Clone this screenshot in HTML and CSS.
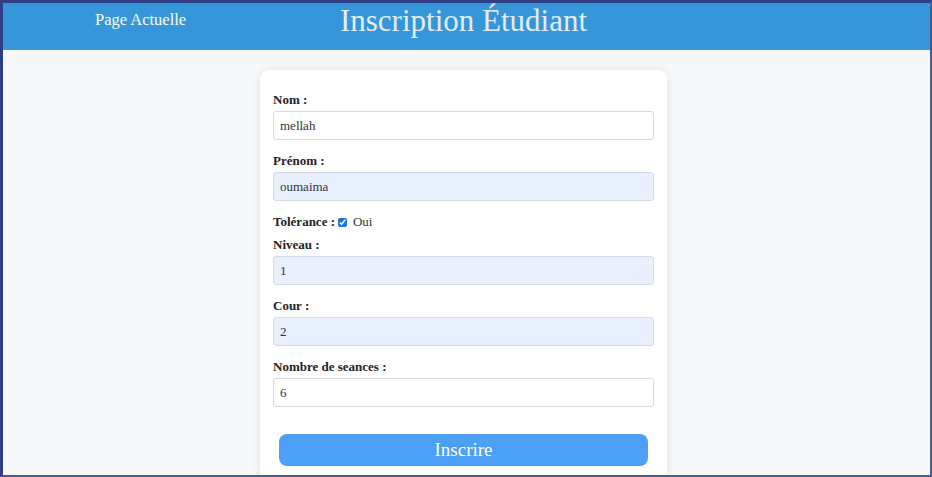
FILE: index.html
```html
<!DOCTYPE html>
<html lang="fr">
<head>
<meta charset="utf-8">
<title>Inscription Étudiant</title>
<link rel="stylesheet" href="styles.css">
</head>
<body>
<div class="frame">
  <header class="topbar">
    <nav class="nav"><a class="nav-link" href="#">Page Actuelle</a></nav>
    <h1 class="title">Inscription Étudiant</h1>
    <div class="spacer"></div>
  </header>
  <main class="content">
    <form class="card">
      <div class="field">
        <label class="label">Nom :</label>
        <input class="input" type="text" value="mellah">
      </div>
      <div class="field">
        <label class="label">Prénom :</label>
        <input class="input filled" type="text" value="oumaima">
      </div>
      <div class="check-row">
        <span class="label">Tolérance :</span>
        <input class="check" type="checkbox" checked>
        <span class="check-text">Oui</span>
      </div>
      <div class="field">
        <label class="label">Niveau :</label>
        <input class="input filled" type="text" value="1">
      </div>
      <div class="field">
        <label class="label">Cour :</label>
        <input class="input filled" type="text" value="2">
      </div>
      <div class="field">
        <label class="label">Nombre de seances :</label>
        <input class="input" type="text" value="6">
      </div>
      <button class="submit" type="button">Inscrire</button>
    </form>
  </main>
</div>
</body>
</html>
```
FILE: styles.css
```css
* { box-sizing: border-box; }
html, body { margin: 0; padding: 0; }
body {
  font-family: "Liberation Serif", "DejaVu Serif", serif;
  background: #2f3f86;
}
.frame {
  width: 932px;
  height: 477px;
  border-top: 3px solid #2f3f86;
  border-left: 3px solid #2f3f86;
  border-right: 2px solid #4a5a96;
  border-bottom: 2px solid #4a5a96;
  background: #f5f7f8;
  overflow: hidden;
}
.topbar {
  height: 47px;
  background: #3597d9;
  display: grid;
  grid-template-columns: 1fr auto 1fr;
  align-items: start;
}
.nav { padding: 7px 0 0 92px; }
.nav-link {
  color: #fbfbf4;
  text-decoration: none;
  font-size: 16.5px;
}
.title {
  margin: 1px 6px 0 0;
  font-weight: normal;
  font-size: 31px;
  color: #e3ecf5;
  line-height: 34px;
}
.content {
  display: flex;
  justify-content: center;
  padding: 20px 0 0 0;
}
.card {
  width: 407px;
  margin-left: -6px;
  background: #ffffff;
  border-radius: 9px;
  box-shadow: 0 0 8px rgba(0,0,0,0.08);
  padding: 22px 13px 30px 13px;
  height: 420px;
}
.field {
  display: flex;
  flex-direction: column;
  margin-bottom: 13px;
}
.label {
  font-weight: bold;
  font-size: 13px;
  color: #222;
  line-height: 16px;
  margin-bottom: 3px;
}
.input {
  height: 29px;
  border: 1px solid #d8dadc;
  border-radius: 3px;
  padding: 0 6px;
  font-family: inherit;
  font-size: 13px;
  color: #333;
  background: #fff;
}
.filled { background: #e8f0fe; border-color: #d5dce8; }
.check-row {
  display: flex;
  align-items: center;
  margin: 0 0 7px 0;
  height: 16px;
}
.check-row .label { margin: 0 3px 0 0; }
.check {
  margin: 0 6px 0 0;
  width: 9px;
  height: 9px;
  accent-color: #1a73e8;
}
.check-text { font-size: 13px; color: #333; }
.submit {
  display: block;
  width: 369px;
  margin: 27px auto 0 auto;
  height: 32px;
  border: none;
  border-radius: 8px;
  background: #4ca0f7;
  color: #ffffff;
  font-family: inherit;
  font-size: 19px;
}
```
